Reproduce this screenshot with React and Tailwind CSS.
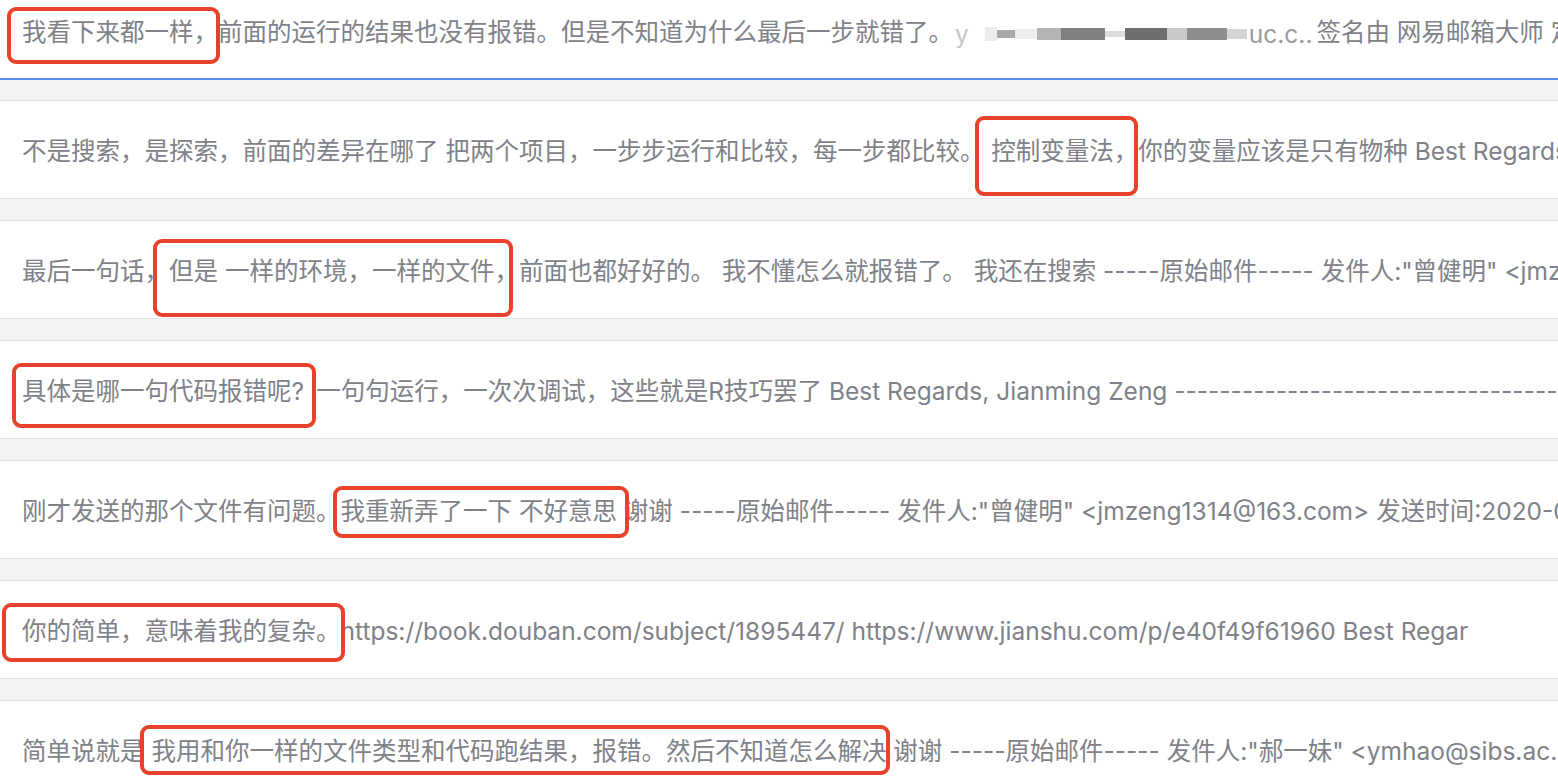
import React from 'react';

const FONT = { fontFamily: 'Inter, "Noto Sans CJK SC", sans-serif' };

const ROWS = [
  {
    text: '不是搜索，是探索，前面的差异在哪了 把两个项目，一步步运行和比较，每一步都比较。 控制变量法，你的变量应该是只有物种 Best Regards, Jianming Zeng',
    box: 'left-[975px] top-[15px] w-[163px] h-[80px]',
  },
  {
    text: '最后一句话，但是 一样的环境，一样的文件，前面也都好好的。 我不懂怎么就报错了。 我还在搜索 -----原始邮件----- 发件人:"曾健明" <jmzeng1314@163.com>',
    box: 'left-[153px] top-[18px] w-[360px] h-[78px]',
  },
  {
    text: '具体是哪一句代码报错呢?\u2002一句句运行，一次次调试，这些就是R技巧罢了 Best Regards, Jianming Zeng ------------------------------------------------------------',
    box: 'left-[12px] top-[22px] w-[304px] h-[65px]',
  },
  {
    text: '刚才发送的那个文件有问题。我重新弄了一下 不好意思 谢谢 -----原始邮件----- 发件人:"曾健明" <jmzeng1314@163.com> 发送时间:2020-05-12',
    box: 'left-[333px] top-[25px] w-[296px] h-[52px]',
  },
  {
    text: '你的简单，意味着我的复杂。https://book.douban.com/subject/1895447/ https://www.jianshu.com/p/e40f49f61960 Best Regar',
    box: 'left-[2px] top-[22px] w-[343px] h-[59px]',
  },
  {
    text: '简单说就是 我用和你一样的文件类型和代码跑结果，报错。然后不知道怎么解决 谢谢 -----原始邮件----- 发件人:"郝一妹" <ymhao@sibs.ac.cn>',
    box: 'left-[140px] top-[24px] w-[750px] h-[50px]',
  },
];

function Mark({ className }) {
  return (
    <div className={`absolute ${className} border-4 border-[#e8422c] rounded-[9px] pointer-events-none`} />
  );
}

// pixelated part of the signature
function Mosaic() {
  return (
    <span className="inline-flex items-center h-[24px] ml-[2px] mr-[4px] align-middle">
      <span className="text-[#c4c6c9] mr-[16px]">y</span>
      <span className="w-[12px] h-[14px] bg-[#ececec]" />
      <span className="w-[18px] h-[8px] bg-[#a9a9a9]" />
      <span className="w-[22px] h-[10px] bg-[#eeeeee]" />
      <span className="w-[24px] h-[12px] bg-[#b4b4b4]" />
      <span className="w-[44px] h-[12px] bg-[#808080]" />
      <span className="w-[20px] h-[6px] bg-[#dcdcdc]" />
      <span className="w-[42px] h-[12px] bg-[#6f6f6f]" />
      <span className="w-[20px] h-[12px] bg-[#c9c9c9]" />
      <span className="w-[40px] h-[12px] bg-[#8e8e8e]" />
      <span className="w-[20px] h-[10px] bg-[#d4d4d4]" />
      <span className="ml-[2px] text-[#9a9ca0]">uc.c..</span>
    </span>
  );
}

export default function App() {
  return (
    <div className="w-[1558px] h-[784px] overflow-hidden bg-[#f3f4f6]" style={FONT}>
      {/* first mail, cut at the top */}
      <div className="relative h-[80px] bg-white border-b-2 border-[#5590ec] flex items-center pl-[22px] pb-[14px] overflow-hidden">
        <span className="whitespace-nowrap text-[24.5px] text-[#7f8288]">
          我看下来都一样，前面的运行的结果也没有报错。但是不知道为什么最后一步就错了。
          <Mosaic />
          签名由 网易邮箱大师 定制
        </span>
        <Mark className="left-[7px] top-[7px] w-[213px] h-[57px]" />
      </div>

      {ROWS.map((row, i) => (
        <div
          key={i}
          className={`relative h-[99px] bg-white border-y border-[#e3e4e6] flex items-center pl-[22px] overflow-hidden ${i === 0 ? 'mt-[20px]' : 'mt-[21px]'}`}
        >
          <span className="whitespace-nowrap text-[24.5px] text-[#7f8288] pt-[4px]">{row.text}</span>
          <Mark className={row.box} />
        </div>
      ))}
    </div>
  );
}
